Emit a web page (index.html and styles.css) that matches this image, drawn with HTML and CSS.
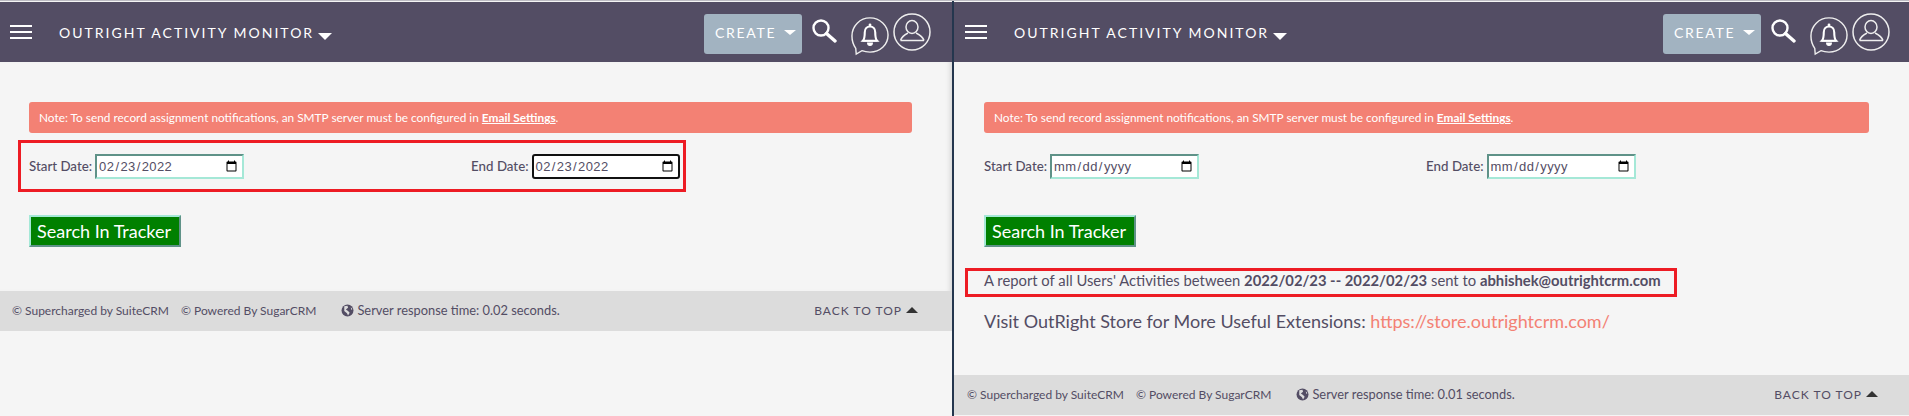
FILE: index.html
```html
<!DOCTYPE html>
<html lang="en">
<head>
    <meta charset="UTF-8">
    <meta name="viewport" content="width=device-width, initial-scale=1.0">
    <title>Outright Activity Monitor</title>
    <link rel="stylesheet" href="styles.css">
</head>
<body>
    <svg class="icon-defs" width="0" height="0">
        <symbol id="i-search" viewBox="0 0 26 26">
            <circle cx="10" cy="10" r="7.5" fill="none" stroke="#fff" stroke-width="2.4"/>
            <path d="M15.5 15.5 L24 23" stroke="#fff" stroke-width="3.4" stroke-linecap="round"/>
        </symbol>
        <symbol id="i-bell" viewBox="0 0 40 42">
            <path d="M5 35 C2.500 31.500 1 27 1 22 C1 11.500 9.500 3 20 3 C30.500 3 39 11.500 39 21 C39 31.500 30.500 39 20 39 C16.500 39 14 38.500 11.500 37.500 L5.500 41 Z" fill="none" stroke="#eee" stroke-width="1.500"/>
            <path d="M12.500 27 C14.500 25 14.500 22 14.500 18 C14.500 14.500 17 12 20 12 C23 12 25.500 14.500 25.500 18 C25.500 22 25.500 25 27.500 27 Z" fill="none" stroke="#fff" stroke-width="2.200"/>
            <circle cx="20" cy="10.500" r="1.500" fill="#fff"/>
            <path d="M12 27.500 H28 M17.500 29.500 A2.500 2.500 0 0 0 22.500 29.500 Z" fill="#fff" stroke="#fff" stroke-width="1.200"/>
        </symbol>
        <symbol id="i-user" viewBox="0 0 38 38">
            <circle cx="19" cy="19" r="18" fill="none" stroke="#eee" stroke-width="1.500"/>
            <ellipse cx="19" cy="14" rx="6" ry="6.500" fill="none" stroke="#eee" stroke-width="1.500"/>
            <path d="M7.500 27.500 C9 23 12 21.500 15 20 M31 27.500 C29.500 23 26 21.500 23 20 M7.500 27.500 H31" fill="none" stroke="#eee" stroke-width="1.500"/>
        </symbol>
        <symbol id="i-globe" viewBox="0 0 12 12">
            <circle cx="6" cy="6" r="5.500" fill="#534d64"/>
            <path d="M3 2 L6 1.500 L6.500 3.500 L4.500 5 L6.500 6.500 L8 8 L6.500 10.500 L5.500 8.500 L3 6.500 Z M9 3 L10.500 4.500 L9.500 5.500 Z" fill="#dcdcdc"/>
        </symbol>
    </svg>

    <div class="shots">
        <!-- left window: dates filled in -->
        <section class="pane">
            <header class="topbar">
                <span class="burger"><i></i><i></i><i></i></span>
                <span class="module">OUTRIGHT ACTIVITY MONITOR</span>
                <span class="caret"></span>
                <span class="create">CREATE <span class="caret-small"></span></span>
                <svg class="ic-search"><use href="#i-search"/></svg>
                <svg class="ic-bell"><use href="#i-bell"/></svg>
                <svg class="ic-user"><use href="#i-user"/></svg>
            </header>
            <main class="content">
                <div class="alert">Note: To send record assignment notifications, an SMTP server must be configured in <a href="#">Email Settings</a>.</div>
                <form class="dates marked">
                    <label class="date-field">Start Date:
                        <input type="date" value="2022-02-23">
                    </label>
                    <label class="date-field end">End Date:
                        <input class="focused" type="date" value="2022-02-23">
                    </label>
                </form>
                <button class="search-btn" type="button">Search In Tracker</button>
            </main>
            <footer class="foot">
                <span class="copy">© Supercharged by SuiteCRM</span>
                <span class="copy">© Powered By SugarCRM</span>
                <span class="server"><svg class="ic-globe"><use href="#i-globe"/></svg> Server response time: 0.02 seconds.</span>
                <span class="totop">BACK TO TOP <span class="caret-up"></span></span>
            </footer>
        </section>

        <!-- right window: report sent -->
        <section class="pane pane-right">
            <header class="topbar">
                <span class="burger"><i></i><i></i><i></i></span>
                <span class="module">OUTRIGHT ACTIVITY MONITOR</span>
                <span class="caret"></span>
                <span class="create">CREATE <span class="caret-small"></span></span>
                <svg class="ic-search"><use href="#i-search"/></svg>
                <svg class="ic-bell"><use href="#i-bell"/></svg>
                <svg class="ic-user"><use href="#i-user"/></svg>
            </header>
            <main class="content">
                <div class="alert">Note: To send record assignment notifications, an SMTP server must be configured in <a href="#">Email Settings</a>.</div>
                <form class="dates">
                    <label class="date-field">Start Date:
                        <input type="date">
                    </label>
                    <label class="date-field end">End Date:
                        <input type="date">
                    </label>
                </form>
                <button class="search-btn" type="button">Search In Tracker</button>
                <p class="report">A report of all Users' Activities between <b>2022/02/23 -- 2022/02/23</b> sent to <b>abhishek@outrightcrm.com</b></p>
                <p class="visit">Visit OutRight Store for More Useful Extensions: <a href="#">https://store.outrightcrm.com/</a></p>
            </main>
            <footer class="foot">
                <span class="copy">© Supercharged by SuiteCRM</span>
                <span class="copy">© Powered By SugarCRM</span>
                <span class="server"><svg class="ic-globe"><use href="#i-globe"/></svg> Server response time: 0.01 seconds.</span>
                <span class="totop">BACK TO TOP <span class="caret-up"></span></span>
            </footer>
        </section>
    </div>
</body>
</html>
```

FILE: styles.css
```css
body {
    margin: 0;
    background: #f5f5f5;
    font-family: Lato, "Open Sans", sans-serif;
    color: #534d64;
    overflow: hidden;
}
.icon-defs {
    position: absolute;
}
.shots {
    display: flex;
    height: 416px;
    border-top: 1px solid #bdbcc3;
    box-sizing: border-box;
}
.pane {
    width: 952px;
    flex: none;
    display: flex;
    flex-direction: column;
    box-sizing: border-box;
    padding-top: 1px;
}
.pane-right {
    flex: 1;
    width: auto;
    border-left: 2px solid #24364e;
}

/* top bar */
.topbar {
    height: 60px;
    flex: none;
    background: #534d64;
    display: flex;
    align-items: center;
    color: #fff;
}
.burger {
    width: 22px;
    margin-left: 10px;
    display: flex;
    flex-direction: column;
    gap: 4px;
}
.pane-right .burger {
    margin-left: 11px;
}
.burger i {
    height: 2px;
    background: #fff;
}
.module {
    margin-left: 27px;
    font-size: 14px;
    letter-spacing: 2px;
}
.caret {
    margin: 9px 0 0 4px;
    border-left: 7.500px solid transparent;
    border-right: 7.500px solid transparent;
    border-top: 7px solid #fff;
}
.create {
    margin-left: auto;
    width: 98px;
    height: 40px;
    margin-top: 4px;
    box-sizing: border-box;
    padding: 0 0 4px 11px;
    background: #a2b3c1;
    border-radius: 3px;
    font-size: 14px;
    letter-spacing: 1.7px;
    display: flex;
    align-items: center;
    gap: 8px;
}
.caret-small {
    border-left: 6px solid transparent;
    border-right: 6px solid transparent;
    border-top: 5px solid #fff;
}
.ic-search {
    width: 26px;
    height: 26px;
    margin: -2px 0 0 9px;
}
.ic-bell {
    width: 38px;
    height: 42px;
    margin: 5px 0 0 14px;
}
.ic-user {
    width: 38px;
    height: 38px;
    margin: 0 21px 0 4px;
}
.pane-right .ic-user {
    margin-right: 19px;
}

/* page body */
.content {
    flex: 1;
    padding: 40px 40px 0 29px;
    font-size: 14px;
    box-shadow: inset -5px 0 5px -3px rgba(0, 0, 0, 0.12);
}
.pane-right .content {
    padding-left: 30px;
    box-shadow: none;
}
.alert {
    background: #f38174;
    border-radius: 3px;
    height: 31px;
    line-height: 31px;
    padding-left: 10px;
    color: #fff;
    font-size: 11.850px;
    box-sizing: border-box;
}
.alert a {
    color: #fff;
    font-weight: bold;
}
.dates {
    display: flex;
    height: 52px;
    align-items: center;
    margin-top: 7px;
}
.dates.marked {
    margin-left: -11px;
    padding-left: 8px;
    width: 668px;
    border: 3px solid #ed1c24;
    box-sizing: border-box;
}
.date-field {
    display: flex;
    align-items: center;
    gap: 3px;
    font-size: 13.300px;
    font-weight: 500;
}
.date-field.end {
    margin-left: 227px;
}
input[type="date"] {
    width: 149px;
    height: 25px;
    box-sizing: border-box;
    padding: 0 2px 0 1px;
    font-family: "Liberation Sans", sans-serif;
    font-size: 13px;
    letter-spacing: 0.4px;
    color: #534d64;
    background: #fff;
    border-style: solid;
    border-width: 2px;
    border-color: #5f9288 #a5e8d7 #a5e8d7 #5f9288;
}
input.focused {
    width: 148px;
    border: 2px solid #111;
    border-radius: 3px;
}
.search-btn {
    display: block;
    margin-top: 23px;
    width: 152px;
    height: 32px;
    padding: 0 2px 0 0;
    background: #008000;
    color: #fff;
    font-family: Lato, sans-serif;
    font-size: 18px;
    border-style: solid;
    border-width: 2px;
    border-color: #a5e8d7 #5f9288 #5f9288 #a5e8d7;
}
.report {
    margin: 21px 0 0 -19px;
    width: 712px;
    height: 29px;
    line-height: 19px;
    padding-left: 16px;
    border: 3px solid #ed1c24;
    box-sizing: border-box;
    font-size: 14.800px;
}
.visit {
    margin: 13px 0 0;
    font-size: 18px;
}
.visit a {
    color: #f38174;
    text-decoration: none;
}

/* footer */
.foot {
    height: 40px;
    flex: none;
    margin-bottom: 85px;
    background: #dcdcdc;
    display: flex;
    align-items: center;
    box-sizing: border-box;
    padding: 0 34px 2px 12px;
    font-size: 12px;
}
.pane-right .foot {
    margin-bottom: 1px;
    padding-left: 13px;
    padding-right: 31px;
}
.copy {
    margin-right: 12px;
    font-size: 12px;
}
.server {
    margin-left: 13px;
    font-size: 12.850px;
    display: flex;
    align-items: center;
    gap: 3px;
}
.ic-globe {
    width: 13px;
    height: 13px;
}
.totop {
    margin-left: auto;
    font-size: 12px;
    letter-spacing: 1px;
    display: flex;
    align-items: center;
    gap: 4px;
}
.caret-up {
    border-left: 6px solid transparent;
    border-right: 6px solid transparent;
    border-bottom: 6px solid #333;
}
```
